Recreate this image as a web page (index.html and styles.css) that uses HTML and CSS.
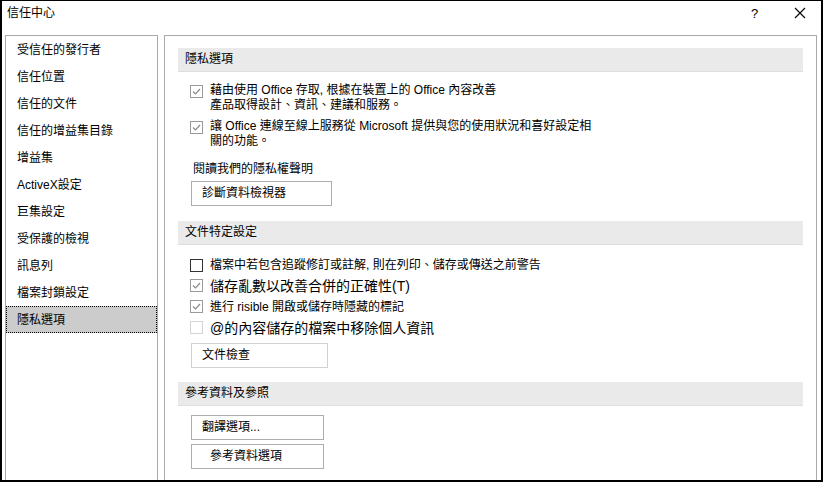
FILE: index.html
```html
<!DOCTYPE html>
<html lang="zh-Hant">
<head>
<meta charset="utf-8">
<title>信任中心</title>
<link rel="stylesheet" href="styles.css">
</head>
<body>
<div class="window">
  <div class="titlebar">
    <span class="title">信任中心</span>
    <span class="help">?</span>
    <span class="close"><svg width="12" height="12" viewBox="0 0 12 12"><path d="M1 1 L11 11 M11 1 L1 11" stroke="#000" stroke-width="1.1" fill="none"/></svg></span>
  </div>
  <div class="body">
    <ul class="nav">
      <li>受信任的發行者</li>
      <li>信任位置</li>
      <li>信任的文件</li>
      <li>信任的增益集目錄</li>
      <li>增益集</li>
      <li>ActiveX設定</li>
      <li>巨集設定</li>
      <li>受保護的檢視</li>
      <li>訊息列</li>
      <li>檔案封鎖設定</li>
      <li class="selected">隱私選項</li>
    </ul>
    <div class="content">
      <div class="section-head first">隱私選項</div>
      <div class="opt two-line o1">
        <span class="cb checked"><svg width="11" height="11" viewBox="0 0 11 11"><path d="M2 5.5 L4.5 8 L9 3" stroke="#8a8a8a" stroke-width="1.2" fill="none"/></svg></span>
        <span class="label">藉由使用 Office 存取, 根據在裝置上的 Office 內容改善<br>產品取得設計、資訊、建議和服務。</span>
      </div>
      <div class="opt two-line o2">
        <span class="cb checked"><svg width="11" height="11" viewBox="0 0 11 11"><path d="M2 5.5 L4.5 8 L9 3" stroke="#8a8a8a" stroke-width="1.2" fill="none"/></svg></span>
        <span class="label">讓 Office 連線至線上服務從 Microsoft 提供與您的使用狀況和喜好設定相<br>關的功能。</span>
      </div>
      <div class="link">閱讀我們的隱私權聲明</div>
      <div class="btn btn-diag">診斷資料檢視器</div>

      <div class="section-head second">文件特定設定</div>
      <div class="rows">
        <div class="opt row r1">
          <span class="cb"></span>
          <span class="label">檔案中若包含追蹤修訂或註解, 則在列印、儲存或傳送之前警告</span>
        </div>
        <div class="opt row r2">
          <span class="cb checked"><svg width="11" height="11" viewBox="0 0 11 11"><path d="M2 5.5 L4.5 8 L9 3" stroke="#8a8a8a" stroke-width="1.2" fill="none"/></svg></span>
          <span class="label big">儲存亂數以改善合併的正確性(T)</span>
        </div>
        <div class="opt row r3">
          <span class="cb checked"><svg width="11" height="11" viewBox="0 0 11 11"><path d="M2 5.5 L4.5 8 L9 3" stroke="#8a8a8a" stroke-width="1.2" fill="none"/></svg></span>
          <span class="label">進行 risible 開啟或儲存時隱藏的標記</span>
        </div>
        <div class="opt row r4">
          <span class="cb disabled"></span>
          <span class="label big">@的內容儲存的檔案中移除個人資訊</span>
        </div>
      </div>
      <div class="btn btn-inspect">文件檢查</div>

      <div class="section-head third">參考資料及參照</div>
      <div class="btn btn-trans">翻譯選項...</div>
      <div class="btn btn-ref">參考資料選項</div>
    </div>
  </div>
</div>
</body>
</html>
```
FILE: styles.css
```css
* { box-sizing: border-box; }
html, body { margin: 0; padding: 0; background: #fff; }
body {
  font-family: "Liberation Sans", "Noto Sans CJK TC", sans-serif;
  font-size: 12px;
  color: #000;
}
.window {
  width: 823px;
  height: 482px;
  border: 2px solid #000;
  border-top-width: 1px;
  border-right-width: 2px;
  display: flex;
  flex-direction: column;
  overflow: hidden;
}
.titlebar {
  height: 34px;
  flex: none;
  display: flex;
  align-items: flex-start;
  padding-top: 5px;
}
.title {
  margin-left: 5px;
  font-size: 12px;
  line-height: 15px;
  flex: 1;
}
.help {
  font-size: 13px;
  line-height: 15px;
  width: 12px;
  margin-right: 31px;
}
.close {
  width: 12px;
  height: 12px;
  margin-top: 1px;
  margin-right: 15px;
}
.close svg { display: block; }

.body {
  flex: 1;
  display: flex;
  padding-left: 3px;
  gap: 6px;
  min-height: 0;
}
.nav {
  list-style: none;
  margin: 0;
  padding: 0;
  width: 153px;
  flex: none;
  border: 1px solid #a9a9a9;
  border-bottom: none;
}
.nav li {
  height: 27px;
  line-height: 28px;
  padding-left: 11px;
  white-space: nowrap;
}
.nav li.selected {
  background: #cccccc;
  border: 1px dotted #000;
  padding-left: 10px;
  line-height: 26px;
}
.content {
  width: 653px;
  flex: none;
  border: 1px solid #a9a9a9;
  border-bottom: none;
  padding: 0 13px 0 13px;
}
.section-head {
  height: 24px;
  line-height: 23px;
  background: #eaeaea;
  border-bottom: 1px solid #dedede;
  padding-left: 7px;
}
.section-head.first { margin-top: 12px; }
.section-head.second { margin-top: 15px; }
.section-head.third { margin-top: 14px; }

.opt {
  display: flex;
  align-items: flex-start;
  padding-left: 12px;
}
.cb {
  width: 13px;
  height: 13px;
  border: 1px solid #333;
  background: #fff;
  flex: none;
  display: flex;
  align-items: center;
  justify-content: center;
}
.cb svg { display: block; }
.cb.checked { border-color: #9a9a9a; }
.cb.disabled { border-color: #d4d4d4; }
.label {
  margin-left: 7px;
  white-space: nowrap;
}
.two-line .label { line-height: 15px; }
.two-line .cb { margin-top: 2px; }
.o1 { margin-top: 11px; }
.o2 { margin-top: 6px; }

.link {
  margin-top: 13px;
  padding-left: 15px;
  line-height: 15px;
}
.btn {
  border: 1px solid #adadad;
  background: #fff;
  height: 25px;
  line-height: 23px;
  padding-left: 10px;
  margin-left: 13px;
  white-space: nowrap;
}
.btn-diag { width: 141px; margin-top: 4px; }
.rows { margin-top: 10px; }
.row { align-items: center; }
.row .label { line-height: 20px; }
.r1 { height: 20px; }
.r2, .r3, .r4 { height: 21px; }
.label.big { font-size: 14px; }
.btn-inspect { width: 137px; margin-top: 5px; border-color: #d2d2d2; }
.btn-trans { width: 133px; margin-top: 9px; }
.btn-ref { width: 133px; margin-top: 4px; padding-left: 18px; }
```
